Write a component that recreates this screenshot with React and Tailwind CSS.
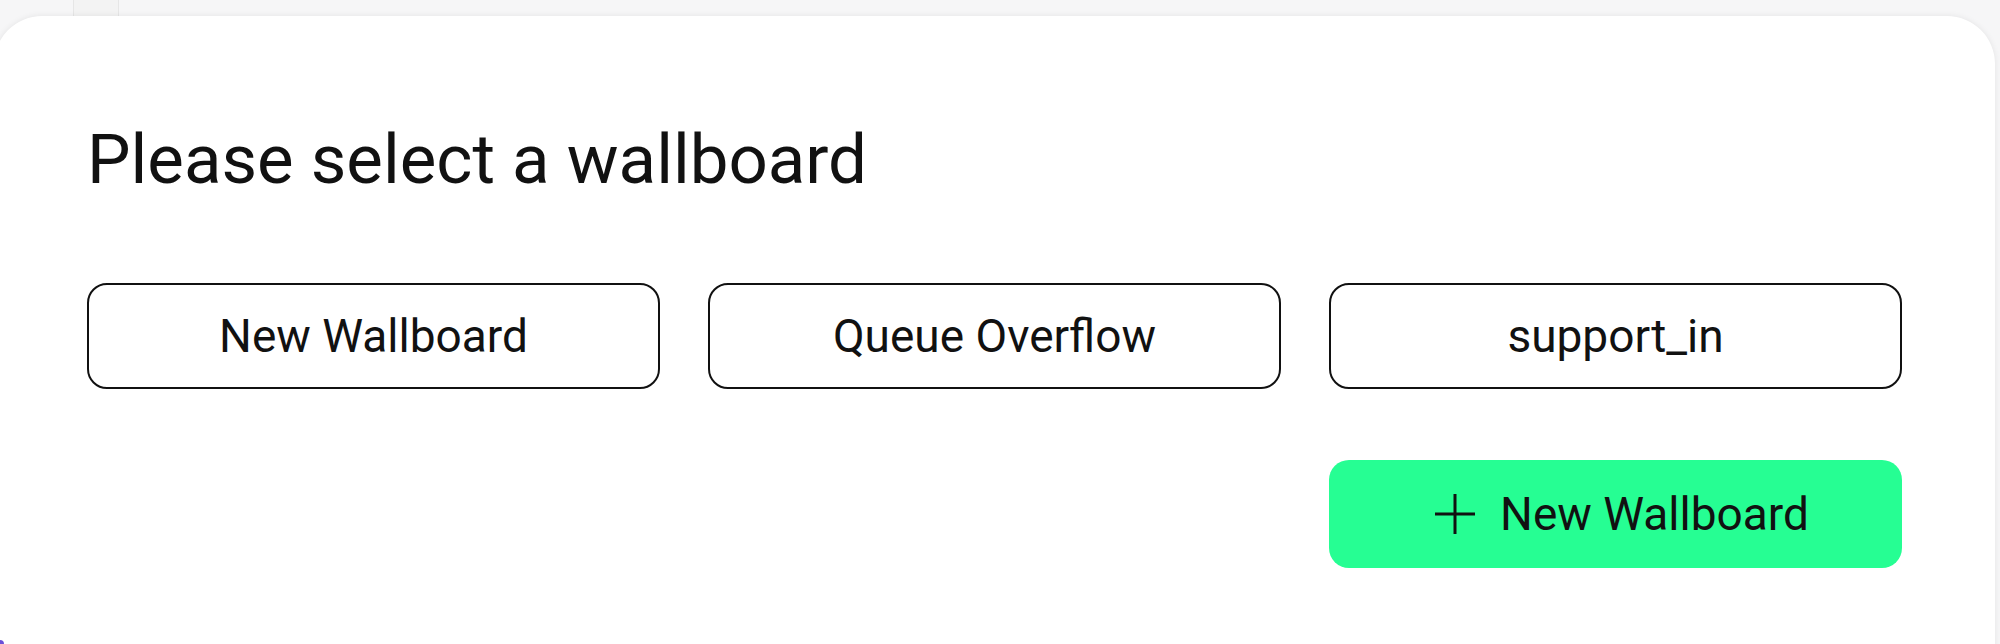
const boards = ['New Wallboard', 'Queue Overflow', 'support_in']

function PlusIcon() {
  return (
    <svg width="42" height="42" viewBox="0 0 42 42" fill="none" stroke="#111" strokeWidth="3">
      <line x1="21" y1="1" x2="21" y2="41" />
      <line x1="1" y1="21" x2="41" y2="21" />
    </svg>
  )
}

export default function App() {
  return (
    <div
      className="relative h-[644px] w-[2000px] overflow-hidden bg-[#f6f6f7]"
      style={{ fontFamily: 'Roboto, "Noto Sans", sans-serif' }}
    >
      {/* element peeking out behind the card */}
      <div className="ml-[73px] h-[16px] w-[46px] border-x border-[#e6e6e6] bg-[#f3f3f3]" />

      <div className="ml-[-6px] h-[700px] w-[2001px] rounded-[48px] bg-white px-[93px] pt-[110px] shadow-[0_0_6px_rgba(0,0,0,0.08)]">
        <h1 className="text-[69px] leading-[68px] font-normal text-[#111]">
          Please select a wallboard
        </h1>

        <div className="mt-[89px] grid grid-cols-3 gap-x-[48px]">
          {boards.map((b) => (
            <button
              key={b}
              className="flex h-[106px] items-center justify-center rounded-[20px] border-[2.5px] border-[#111] bg-white text-[46px] text-[#111]"
            >
              {b}
            </button>
          ))}
        </div>

        <div className="mt-[71px] grid grid-cols-3 gap-x-[48px]">
          <button className="col-start-3 flex h-[108px] items-center justify-center gap-[24px] rounded-[20px] bg-[#26fe93] pl-[12px] text-[46px] text-[#111]">
            <PlusIcon />
            New Wallboard
          </button>
        </div>
      </div>

      <div className="absolute bottom-[-4px] left-[-4px] h-[8px] w-[8px] rounded-full bg-[#6b4fd8]" />
    </div>
  )
}
